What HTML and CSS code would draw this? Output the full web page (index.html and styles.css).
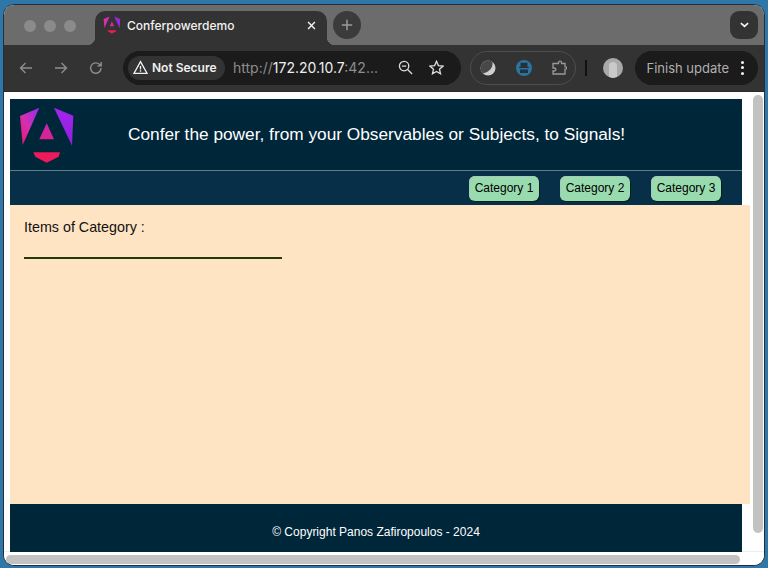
FILE: index.html
```html
<!DOCTYPE html>
<html lang="en">
<head>
<meta charset="utf-8">
<title>Conferpowerdemo</title>
<link rel="stylesheet" href="styles.css">
</head>
<body>
<div class="window">
  <div class="tabstrip">
    <div class="traffic"><span class="dot"></span><span class="dot"></span><span class="dot"></span></div>
    <div class="tab">
      <svg class="favicon" viewBox="18 106 58 58" aria-hidden="true">
        <polygon fill="#d62fb0" points="20,116 39.3,107.7 22.7,145"/>
        <polygon fill="#9a28e0" points="54,107.7 73.3,115.7 72,145.7"/>
        <polygon fill="#d62a90" points="46.7,123.3 54,139.3 39.3,139.3"/>
        <polygon fill="#ee1a5c" points="33.3,152.3 60,152.3 58.7,156.7 46.7,162.7 35.3,156.7"/>
      </svg>
      <span class="tab-title">Conferpowerdemo</span>
      <svg class="tab-close" viewBox="0 0 10 10" aria-hidden="true"><path d="M1.2 1.2 8.8 8.8M8.8 1.2 1.2 8.8"/></svg>
    </div>
    <div class="newtab"><svg viewBox="0 0 12 12" aria-hidden="true"><path d="M6 .8v10.4M.8 6h10.4"/></svg></div>
    <div class="strip-menu"><svg viewBox="0 0 10 6" aria-hidden="true"><path d="M1 1l4 3.6L9 1"/></svg></div>
  </div>

  <div class="toolbar">
    <div class="nav-icons">
      <svg class="tool" viewBox="0 0 16 16" aria-hidden="true"><path d="M14 8H2.5M7.5 3 2.5 8l5 5"/></svg>
      <svg class="tool" viewBox="0 0 16 16" aria-hidden="true"><path d="M2 8h11.5M8.5 3l5 5-5 5"/></svg>
      <svg class="tool" viewBox="0 0 16 16" aria-hidden="true"><path d="M13 8a5.2 5.2 0 1 1-1.6-3.7L13 5.8M13.2 2v3.9H9.4"/></svg>
    </div>
    <div class="omnibox">
      <div class="chip">
        <svg class="warn" viewBox="0 0 16 16" aria-hidden="true"><path d="M8 1.800 15 14.200H1Z"/><path d="M8 6.400v3.800M8 11v1.400"/></svg>
        <span>Not Secure</span>
      </div>
      <div class="url"><span class="dim">http://</span><span class="host">172.20.10.7</span><span class="dim">:42...</span></div>
      <svg class="omni-icon zoom-out" viewBox="0 0 16 16" aria-hidden="true"><circle cx="6.5" cy="6.5" r="5"/><path d="M10.2 10.2 15 15M4.2 6.5h4.6"/></svg>
      <svg class="omni-icon star" viewBox="0 0 16 16" aria-hidden="true"><path d="M8 1.400 10 6l5 .5-3.800 3.300 1.100 4.900L8 12.200l-4.300 2.500 1.100-4.900L1 6.500l5-.5Z"/></svg>
    </div>
    <div class="extensions">
      <svg class="ext" viewBox="0 0 16 16" aria-hidden="true"><circle cx="8" cy="8" r="7.500" fill="#cfcfcf"/><path d="M.5 8a7.500 7.500 0 0 1 11.800-6.100C13.500 7 10 11.800 3 13.600A7.500 7.500 0 0 1 .5 8Z" fill="#484848"/></svg>
      <svg class="ext" viewBox="0 0 16 16" aria-hidden="true"><circle cx="8" cy="8" r="8" fill="#2c74a0"/><path d="M4.500 7V2.800h7V7h1.500v1H3V7Z" fill="#24323c"/><rect x="4" y="9.500" width="8" height="3.500" fill="#24323c"/></svg>
      <svg class="ext puzzle" viewBox="0 0 16 16" aria-hidden="true"><path d="M7.500 3.500V2.600a1.500 1.500 0 0 1 3 0v.900h3.500v3.300h.6a1.200 1.200 0 0 1 0 2.400H14V14H2v-3h1.400a1.500 1.500 0 0 0 0-3H2V3.500Z"/></svg>
    </div>
    <span class="divider"></span>
    <div class="avatar"><span class="avatar-shape"></span></div>
    <div class="update">
      <span>Finish update</span>
      <span class="kebab"><i></i><i></i><i></i></span>
    </div>
  </div>

  <div class="viewport">
    <div class="page-row">
      <div class="page">
        <header class="site-header">
          <svg class="logo" viewBox="18 106 58 58" aria-label="Angular logo" role="img">
            <defs>
              <linearGradient id="lg" x1="0" y1="1" x2="1" y2="0">
                <stop offset="0" stop-color="#f0126a"/>
                <stop offset=".45" stop-color="#d62fb0"/>
                <stop offset="1" stop-color="#8f2bf0"/>
              </linearGradient>
              <linearGradient id="rg" x1="0" y1="0" x2="0" y2="1">
                <stop offset="0" stop-color="#a524f0"/>
                <stop offset="1" stop-color="#8d22d8"/>
              </linearGradient>
              <linearGradient id="mg" x1="0" y1="0" x2="0" y2="1">
                <stop offset="0" stop-color="#c02ab8"/>
                <stop offset="1" stop-color="#e0208c"/>
              </linearGradient>
            </defs>
            <polygon fill="url(#lg)" points="20,116 39.3,107.7 22.7,145"/>
            <polygon fill="url(#rg)" points="54,107.7 73.3,115.7 72,145.7"/>
            <polygon fill="url(#mg)" points="46.7,123.3 54,139.3 39.3,139.3"/>
            <polygon fill="#ee1a5c" points="33.3,152.3 60,152.3 58.7,156.7 46.7,162.7 35.3,156.7"/>
          </svg>
          <h1 class="site-title">Confer the power, from your Observables or Subjects, to Signals!</h1>
        </header>
        <nav class="site-nav">
          <button class="cat-btn">Category 1</button>
          <button class="cat-btn">Category 2</button>
          <button class="cat-btn">Category 3</button>
        </nav>
        <main class="items">
          <p class="items-title">Items of Category :</p>
          <hr class="items-rule">
        </main>
        <footer class="site-footer">© Copyright Panos Zafiropoulos - 2024</footer>
      </div>
      <div class="vbar"><span class="vthumb"></span></div>
    </div>
    <div class="hbar"><span class="hthumb"></span></div>
  </div>
</div>
</body>
</html>
```

FILE: styles.css
```css
* { box-sizing: border-box; }

html, body { margin: 0; height: 100%; }

body {
  background: #2f77a8;
  padding: 4px 3px 2px;
  overflow: hidden;
  font-family: "Liberation Sans", Arial, sans-serif;
}

.window {
  height: 562px;
  display: flex;
  flex-direction: column;
  border: 1px solid #22303a;
  border-radius: 11px;
  overflow: hidden;
  background: #fff;
}

/* tab strip */
.tabstrip {
  flex: none;
  height: 40px;
  background: #6c6c6c;
  display: flex;
  align-items: flex-end;
  position: relative;
}

.traffic {
  display: flex;
  gap: 8px;
  align-self: flex-start;
  margin: 15px 0 0 20px;
}

.dot {
  width: 12px;
  height: 12px;
  border-radius: 50%;
  background: #8b8b8b;
}

.tab {
  width: 232px;
  height: 34px;
  margin-left: 19px;
  background: #333;
  border-radius: 10px 10px 0 0;
  display: flex;
  align-items: center;
  padding: 0 11px 6px 8px;
  position: relative;
}

.tab::before,
.tab::after {
  content: "";
  position: absolute;
  bottom: 0;
  width: 8px;
  height: 8px;
}

.tab::before {
  left: -8px;
  background: radial-gradient(circle at 0 0, transparent 8px, #333 8.5px);
}

.tab::after {
  right: -8px;
  background: radial-gradient(circle at 100% 0, transparent 8px, #333 8.5px);
}

.favicon { width: 18px; height: 18px; flex: none; }

.tab-title {
  margin-left: 6px;
  flex: 1;
  color: #f2f2f2;
  font: 500 12px Inter, sans-serif;
}

.tab-close {
  width: 9px;
  height: 9px;
  fill: none;
  stroke: #f2f2f2;
  stroke-width: 1.6;
}

.newtab {
  width: 28px;
  height: 28px;
  border-radius: 50%;
  background: #3b3b3b;
  margin: 0 0 6px 6px;
  display: flex;
  align-items: center;
  justify-content: center;
}

.newtab svg {
  width: 12px;
  height: 12px;
  fill: none;
  stroke: #9a9a9a;
  stroke-width: 1.5;
}

.strip-menu {
  width: 28px;
  height: 28px;
  border-radius: 9px;
  background: #333;
  margin: 0 6px 6px auto;
  display: flex;
  align-items: center;
  justify-content: center;
}

.strip-menu svg {
  width: 9px;
  height: 6px;
  fill: none;
  stroke: #f5f5f5;
  stroke-width: 1.8;
}

/* toolbar */
.toolbar {
  flex: none;
  height: 47px;
  background: #333;
  border-bottom: 1px solid #2a2a2a;
  display: flex;
  align-items: center;
  padding: 0 0 1px 14px;
}

.nav-icons { display: flex; gap: 19px; }

.tool {
  width: 16px;
  height: 16px;
  fill: none;
  stroke: #8e8e8e;
  stroke-width: 1.4;
}

.omnibox {
  width: 338px;
  height: 34px;
  margin-left: 19px;
  border-radius: 17px;
  background: #1b1b1b;
  display: flex;
  align-items: center;
  padding: 0 17px 0 5px;
}

.chip {
  width: 97px;
  height: 24px;
  border-radius: 12px;
  background: #333;
  color: #f0f0f0;
  display: flex;
  align-items: center;
  gap: 4px;
  padding-left: 5px;
  font: 600 12px Inter, sans-serif;
  white-space: nowrap;
}

.warn {
  width: 15px;
  height: 15px;
  flex: none;
  fill: none;
  stroke: #f0f0f0;
  stroke-width: 1.4;
}

.url {
  margin-left: 8px;
  flex: 1;
  font: 400 14px Inter, sans-serif;
  white-space: nowrap;
}

.dim { color: #8d8d8d; }
.host { color: #efefef; }

.omni-icon {
  width: 15px;
  height: 15px;
  flex: none;
  fill: none;
  stroke: #dcdcdc;
  stroke-width: 1.4;
}

.star { margin-left: 16px; }

.extensions {
  width: 106px;
  height: 34px;
  margin-left: 9px;
  border: 1px solid #4e4e4e;
  border-radius: 17px;
  display: flex;
  align-items: center;
  justify-content: space-between;
  padding: 0 8px 0 9px;
}

.ext { width: 16px; height: 16px; flex: none; }

.puzzle {
  fill: none;
  stroke: #9a9a9a;
  stroke-width: 1.3;
}

.divider {
  width: 1.500px;
  height: 16px;
  background: #111;
  margin-left: 9px;
}

.avatar {
  width: 20px;
  height: 20px;
  margin-left: 16px;
  border-radius: 50%;
  background: #a9a9a9;
  display: flex;
  justify-content: center;
  align-items: flex-end;
  overflow: hidden;
}

.avatar-shape {
  width: 8px;
  height: 16px;
  border-radius: 4px 4px 2px 2px;
  background: #c9c9c9;
}

.update {
  width: 123px;
  height: 34px;
  margin-left: 12px;
  border-radius: 17px;
  background: #1b1b1b;
  color: #b0b0b0;
  display: flex;
  align-items: center;
  justify-content: space-between;
  padding: 0 14px 0 12px;
  font: 400 13px Inter, sans-serif;
  white-space: nowrap;
}

.kebab { display: flex; flex-direction: column; gap: 2.500px; }
.kebab i { width: 3px; height: 3px; border-radius: 50%; background: #f0f0f0; display: block; }

/* viewport */
.viewport {
  flex: 1;
  min-height: 0;
  background: #fff;
  display: flex;
  flex-direction: column;
}

.page-row {
  flex: none;
  display: flex;
  height: 460px;
  border-bottom: 1px solid #ececec;
}

.page {
  width: 740px;
  padding: 7px 0 0 6px;
  flex: none;
  display: flex;
  flex-direction: column;
}

.site-header {
  width: 732px;
  height: 71px;
  background: #00263a;
  display: flex;
  align-items: flex-start;
  flex: none;
}

.logo {
  width: 58px;
  height: 58px;
  margin: 7px 0 0 8px;
  flex: none;
}

.site-title {
  margin: 24px 0 0 52px;
  color: #fff;
  font: 400 17.270px/22px "Liberation Sans", Arial, sans-serif;
  white-space: nowrap;
}

.site-nav {
  width: 732px;
  height: 35px;
  flex: none;
  background: #072f47;
  border-top: 1px solid #5d7c8c;
  display: flex;
  justify-content: flex-end;
  align-items: center;
  gap: 21px;
  padding: 0 21px 0 0;
}

.cat-btn {
  width: 70px;
  height: 25px;
  padding: 0;
  background: #98dbae;
  border: 0;
  border-radius: 6px;
  box-shadow: 1px 1px 0 #04201a, inset 1px 1px 0 #a9c9b8;
  color: #000;
  font: 400 12px "Liberation Sans", Arial, sans-serif;
}

.items {
  width: 740px;
  height: 299px;
  flex: none;
  background: #ffe4c4;
  padding: 14px 14px 0;
}

.items-title {
  margin: 0;
  color: #111;
  font: 400 14.300px/16px "Liberation Sans", Arial, sans-serif;
}

.items-rule {
  width: 258px;
  height: 2px;
  margin: 22px 0 0;
  border: 0;
  background: #263a06;
}

.site-footer {
  width: 732px;
  height: 48px;
  flex: none;
  background: #00263a;
  color: #fff;
  font: 400 12px/56px "Liberation Sans", Arial, sans-serif;
  text-align: center;
}

.vbar {
  flex: none;
  width: 20px;
  padding: 3px 0 0 9px;
}

.vthumb {
  display: block;
  width: 10px;
  height: 438px;
  border-radius: 5px;
  background: #c2c2c2;
}

.hbar { flex: none; padding: 3px 0 0 2px; }

.hthumb {
  display: block;
  width: 734px;
  height: 9px;
  border-radius: 5px;
  background: #c2c2c2;
}
```
